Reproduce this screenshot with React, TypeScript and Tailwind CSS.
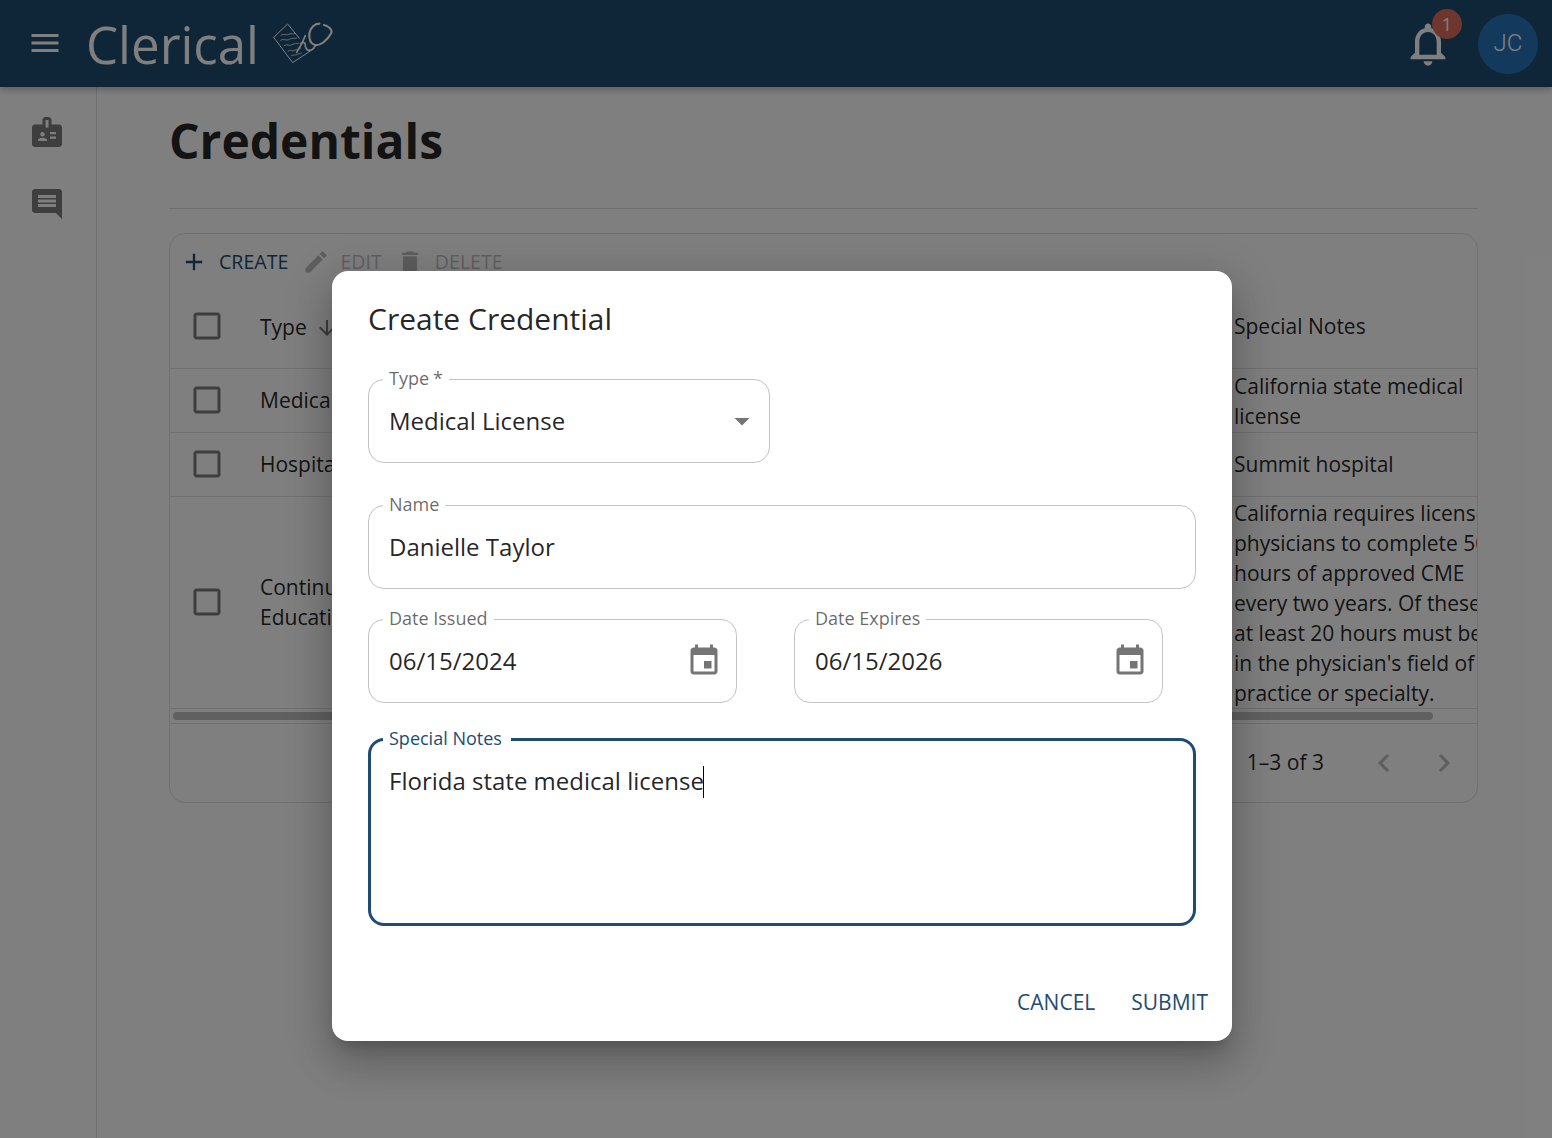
const FONT = "font-['Open_Sans','Noto_Sans',sans-serif]";

function MuiIcon({ d, size, className }: { d: string; size: number; className?: string }) {
  return (
    <svg viewBox="0 0 24 24" width={size} height={size} fill="currentColor" className={className}>
      <path d={d} />
    </svg>
  );
}

const P = {
  menu: "M3 18h18v-2H3v2zm0-5h18v-2H3v2zm0-7v2h18V6H3z",
  badge:
    "M20 7h-5V4c0-1.1-.9-2-2-2h-2c-1.1 0-2 .9-2 2v3H4c-1.1 0-2 .9-2 2v11c0 1.1.9 2 2 2h16c1.1 0 2-.9 2-2V9c0-1.1-.9-2-2-2zM9 12c.83 0 1.5.67 1.5 1.5S9.83 15 9 15s-1.5-.67-1.5-1.5S8.17 12 9 12zm3 6H6v-.75c0-1 2-1.5 3-1.5s3 .5 3 1.5V18zm1-9h-2V4h2v5zm5 7.5h-4V15h4v1.5zm0-3h-4V12h4v1.5z",
  chat: "M4 2h16c1.1 0 2 .9 2 2v18l-4-4H4c-1.1 0-2-.9-2-2V4c0-1.1.9-2 2-2zm2 12h12v-2H6v2zm0-3h12V9H6v2zm0-3h12V6H6v2z",
  bell: "M12 22c1.1 0 2-.9 2-2h-4c0 1.1.9 2 2 2zm6-6v-5c0-3.07-1.63-5.64-4.5-6.32V4c0-.83-.67-1.5-1.5-1.5s-1.5.67-1.5 1.5v.68C7.64 5.36 6 7.92 6 11v5l-2 2v1h16v-1l-2-2zm-2 1H8v-6c0-2.48 1.51-4.5 4-4.5s4 2.02 4 4.5v6z",
  event:
    "M17 12h-5v5h5v-5zM16 1v2H8V1H6v2H5c-1.11 0-1.99.9-1.99 2L3 19c0 1.1.89 2 2 2h14c1.1 0 2-.9 2-2V5c0-1.1-.9-2-2-2h-1V1h-2zm3 18H5V8h14v11z",
  edit: "M3 17.25V21h3.75L17.81 9.94l-3.75-3.75L3 17.25zM20.71 7.04c.39-.39.39-1.02 0-1.41l-2.34-2.34c-.39-.39-1.02-.39-1.41 0l-1.83 1.83 3.75 3.75 1.83-1.83z",
  trash: "M6 19c0 1.1.9 2 2 2h8c1.1 0 2-.9 2-2V7H6v12zM19 4h-3.5l-1-1h-5l-1 1H5v2h14V4z",
  add: "M19 13h-6v6h-2v-6H5v-2h6V5h2v6h6v2z",
  box: "M19 5v14H5V5h14m0-2H5c-1.1 0-2 .9-2 2v14c0 1.1.9 2 2 2h14c1.1 0 2-.9 2-2V5c0-1.1-.9-2-2-2z",
  down: "M20 12l-1.41-1.41L13 16.17V4h-2v12.17l-5.58-5.59L4 12l8 8 8-8z",
  left: "M15.41 7.41 14 6l-6 6 6 6 1.41-1.41L10.83 12z",
  right: "M10 6 8.59 7.41 13.17 12l-4.58 4.59L10 18l6-6z",
  caret: "M7 10l5 5 5-5z",
};

function Logo() {
  return (
    <svg viewBox="0 0 225 165" width={75} height={55} fill="none" stroke="#ffffff" strokeLinecap="round" strokeLinejoin="round" className="ml-[7px] mt-[-2px] shrink-0">
      <g strokeWidth={3}>
        <path d="M23 67 65 27 100 70M23 67 80 143 145 100" />
        <path
          d="M45 60c10-6 14 3 24-2s10 0 18-3M44 76c10-7 16 3 26-3s12 0 22-4M54 92c10-7 14 3 24-3s12 0 20-5M66 108c8-6 12 2 20-2s10-2 18-7M76 122c6-4 10 0 16-3s8-2 14-5"
          opacity={0.75}
        />
      </g>
      <path d="M118 62c-6 16-14 32-26 50M104 86c6-6 14-4 14 4 0 8 2 15 12 17" strokeWidth={5} />
      <path d="M160 26c-14 0-28 12-30 30-1 16 4 30 16 34 16 4 38-14 50-36 3-9-8-22-22-24" strokeWidth={6.5} />
      <path d="M128 106c8 2 14-4 20-14" strokeWidth={5} />
    </svg>
  );
}

function Check() {
  return <MuiIcon d={P.box} size={36} className="mt-[-2px] text-[#7c7c7c]" />;
}

function Row({
  h,
  type,
  notes,
  notesClass,
}: {
  h: string;
  type: string[];
  notes: string[];
  notesClass: string;
}) {
  return (
    <div className={`flex items-center border-b border-[#e0e0e0] ${h}`}>
      <div className="flex w-[90px] shrink-0 pl-[19px]">
        <Check />
      </div>
      <div className="mt-[-1px] w-[974px] shrink-0 whitespace-nowrap text-[21px] leading-[30px] text-black/87">
        {type.map((t) => (
          <div key={t}>{t}</div>
        ))}
      </div>
      <div className={`w-[260px] shrink-0 whitespace-nowrap text-[21px] leading-[30px] text-black/87 ${notesClass}`}>
        {notes.map((t) => (
          <div key={t}>{t}</div>
        ))}
      </div>
    </div>
  );
}

function Field({
  label,
  className,
  children,
  focused,
}: {
  label: React.ReactNode;
  className: string;
  children?: React.ReactNode;
  focused?: boolean;
}) {
  return (
    <div
      className={`relative rounded-[16px] bg-white text-[24px] text-black/87 ${
        focused ? "border-[3px] border-[#1e4c72] px-[18px]" : "border border-[#c4c4c4] px-[20px]"
      } ${className}`}
    >
      <span
        className={`absolute bg-white px-[6px] text-[18px] leading-[22px] ${
          focused ? "left-[12px] top-[-14px] pr-[9px] text-[#1e4c72]" : "left-[14px] top-[-13px] text-black/60"
        }`}
      >
        {label}
      </span>
      {children}
    </div>
  );
}

function DateField({ label, value, className }: { label: string; value: string; className: string }) {
  return (
    <Field label={label} className={`flex h-[84px] items-center justify-between ${className}`}>
      <span>{value}</span>
      <MuiIcon d={P.event} size={36} className="mr-[-6px] mt-[-1px] text-[#757575]" />
    </Field>
  );
}

export default function App() {
  return (
    <div className={`relative h-[1138px] w-full overflow-hidden bg-white ${FONT}`}>
      <header className="relative z-10 flex h-[87px] items-center bg-[#1e4c72] text-white shadow-[0_2px_8px_rgba(0,0,0,0.3)]">
        <MuiIcon d={P.menu} size={36} className="ml-[27px] mt-[-1px] shrink-0" />
        <span className="ml-[23px] mt-[2px] text-[51px] font-normal leading-none">Clerical</span>
        <Logo />
        <div className="ml-auto flex items-center pr-[14px]">
          <div className="relative mt-[1px]">
            <MuiIcon d={P.bell} size={52} />
            <span className="absolute right-[-8px] top-[-9px] flex h-[30px] w-[30px] items-center justify-center rounded-full bg-[#dc6e5c] text-[18px]">
              1
            </span>
          </div>
          <div className="ml-[24px] flex h-[60px] w-[60px] items-center justify-center rounded-full bg-[#2674b8] pb-[2px] font-['Roboto',sans-serif] text-[24px] font-light">
            JC
          </div>
        </div>
      </header>

      <div className="flex h-[1051px]">
        <aside className="flex w-[97px] shrink-0 flex-col items-center gap-[34px] border-r border-[#e0e0e0] pt-[27px]">
          <MuiIcon d={P.badge} size={36} className="ml-[-3px] text-[#7c7c7c]" />
          <MuiIcon d={P.chat} size={36} className="ml-[-2px] mt-[2px] text-[#7c7c7c]" />
        </aside>
        <main className="min-w-0 flex-1 pl-[72px] pr-[74px]">
          <h1 className="mt-[22px] text-[48px] font-bold leading-[64px] text-black/87">Credentials</h1>
          <div className="mt-[35px] border-t border-[#dcdcdc]" />
          <section className="mt-[24px] h-[570px] overflow-hidden rounded-[16px] border border-[#e0e0e0]">
            <div className="flex h-[51px] items-end pb-[8px] text-[19.6px] leading-[30px]">
              <span className="ml-[10px] flex items-center text-[#1e4c72]">
                <MuiIcon d={P.add} size={28} />
                <span className="ml-[11px]">CREATE</span>
              </span>
              <span className="ml-[14px] flex items-center text-black/26">
                <MuiIcon d={P.edit} size={28} />
                <span className="ml-[10px]">EDIT</span>
              </span>
              <span className="ml-[14px] flex items-center text-black/26">
                <MuiIcon d={P.trash} size={28} />
                <span className="ml-[11px]">DELETE</span>
              </span>
            </div>
            <div className="flex h-[84px] items-center border-b border-[#e0e0e0] pt-[1px]">
              <div className="flex w-[90px] shrink-0 pl-[19px]">
                <Check />
              </div>
              <div className="mt-[1px] flex w-[974px] shrink-0 items-center text-[21px] text-black/87">
                Type
                <MuiIcon d={P.down} size={24} className="ml-[8px] text-[#7c7c7c]" />
              </div>
              <div className="mt-[-1px] whitespace-nowrap text-[21px] text-black/87">Special Notes</div>
            </div>
            <Row
              h="h-[64px]"
              type={["Medical License"]}
              notes={["California state medical", "license"]}
              notesClass="mt-0"
            />
            <Row h="h-[64px]" type={["Hospital Privileges"]} notes={["Summit hospital"]} notesClass="mt-[-1px]" />
            <Row
              h="h-[212px]"
              type={["Continuing Medical", "Education"]}
              notesClass="mt-0"
              notes={[
                "California requires licensed",
                "physicians to complete 50",
                "hours of approved CME",
                "every two years. Of these,",
                "at least 20 hours must be",
                "in the physician's field of",
                "practice or specialty.",
              ]}
            />
            <div className="flex h-[15px] items-center border-b border-[#e0e0e0] pl-[3px]">
              <div className="h-[8px] w-[1260px] rounded-full bg-[#c1c1c1]" />
            </div>
            <div className="flex h-[78px] items-center justify-end pr-[15px] text-[21px] text-black/87">
              <span className="mr-[42px]">1–3 of 3</span>
              <MuiIcon d={P.left} size={36} className="text-black/26" />
              <MuiIcon d={P.right} size={36} className="ml-[24px] text-black/26" />
            </div>
          </section>
        </main>
      </div>

      <div className="absolute inset-0 z-20 bg-black/50" />

      <div className="absolute left-[332px] top-[271px] z-30 h-[770px] w-[900px] rounded-[16px] bg-white px-[36px] shadow-[0_11px_15px_-7px_rgba(0,0,0,0.2),0_24px_38px_3px_rgba(0,0,0,0.14),0_9px_46px_8px_rgba(0,0,0,0.12)]">
        <h2 className="pt-[26px] text-[30px] leading-[44px] text-black/87">Create Credential</h2>
        <div className="mt-[38px] flex flex-col">
          <Field
            className="flex h-[84px] w-[402px] items-center justify-between"
            label={
              <>
                Type<span className="ml-[4px]">*</span>
              </>
            }
          >
            <span>Medical License</span>
            <MuiIcon d={P.caret} size={36} className="mr-[-11px] text-[#757575]" />
          </Field>
          <Field label="Name" className="mt-[42px] flex h-[84px] w-[828px] items-center">
            <span>Danielle Taylor</span>
          </Field>
          <div className="mt-[30px] flex">
            <DateField label="Date Issued" value="06/15/2024" className="w-[369px]" />
            <DateField label="Date Expires" value="06/15/2026" className="ml-[57px] w-[369px]" />
          </div>
          <Field focused label="Special Notes" className="mt-[35px] h-[188px] w-[828px] pt-[17px]">
            <span className="leading-[36px]">Florida state medical license</span>
            <span className="ml-[-1px] inline-block h-[32px] w-[1px] translate-y-[8px] bg-black" />
          </Field>
        </div>
        <div className="mr-[-12px] mt-[61px] flex justify-end gap-[36px] text-[21px] leading-[30px] text-[#1e4c72]">
          <span>CANCEL</span>
          <span>SUBMIT</span>
        </div>
      </div>
    </div>
  );
}
